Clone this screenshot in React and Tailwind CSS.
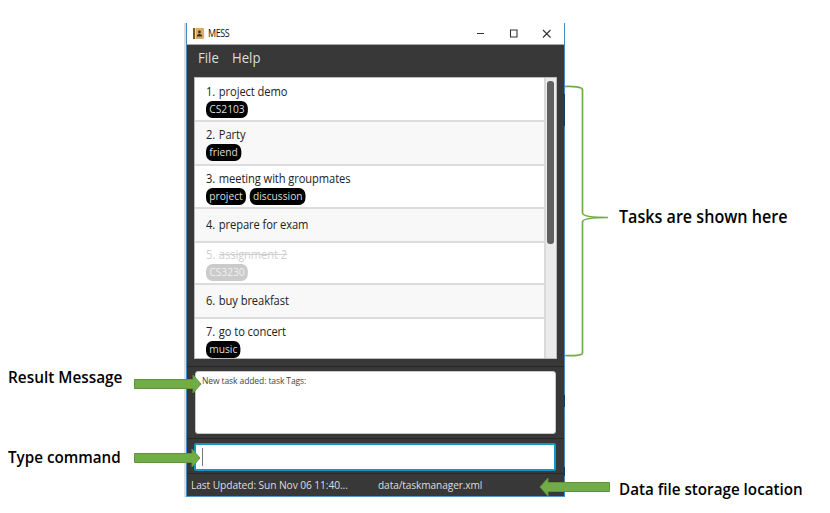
const tasks = [
  { n: 1, name: 'project demo', tags: ['CS2103'], row: 'h-[43px] bg-white pt-px' },
  { n: 2, name: 'Party', tags: ['friend'], row: 'h-[44px] bg-[#f8f8f8]' },
  { n: 3, name: 'meeting with groupmates', tags: ['project', 'discussion'], row: 'h-[43px] bg-white pt-px' },
  { n: 4, name: 'prepare for exam', tags: [], row: 'h-[34px] bg-[#f8f8f8] pb-[2px]' },
  { n: 5, name: 'assignment 2', tags: ['CS3230'], done: true, row: 'h-[42px] bg-white' },
  { n: 6, name: 'buy breakfast', tags: [], row: 'h-[34px] bg-[#f8f8f8] pb-[2px]' },
  { n: 7, name: 'go to concert', tags: ['music'], row: 'h-[43px] bg-white pt-[2px]' },
];

function TaskRow({ task }) {
  return (
    <div className={`flex shrink-0 flex-col justify-center border-b-2 border-[#dcdcdc] pl-[11px] ${task.row}`}>
      <div className={`flex h-[17px] origin-left scale-x-[0.93] items-center gap-1 whitespace-nowrap text-[12px] leading-[17px] tracking-[-0.1px] ${task.done ? 'text-[#cfcfcf]' : 'text-[#222]'}`}>
        <span>{task.n}.</span>
        <span className={task.done ? 'line-through' : ''}>{task.name}</span>
      </div>
      {task.tags.length > 0 && (
        <div className="mt-[1px] flex origin-left scale-x-[0.93] gap-[4px]">
          {task.tags.map((tag) => (
            <span
              key={tag}
              className={`h-[17px] rounded-[7px] px-[3.5px] text-[11px] leading-[16px] ${task.done ? 'bg-[#cbcbcb] text-[#f0f0f0]' : 'bg-black text-[#dedede]'}`}
            >
              {tag}
            </span>
          ))}
        </div>
      )}
    </div>
  );
}

function Arrow({ className, width, flip }) {
  const w = width;
  const points = `0.5,5.5 ${w - 9},5.5 ${w - 9},1 ${w - 1},10 ${w - 9},19 ${w - 9},14.5 0.5,14.5`;
  return (
    <svg className={`absolute ${className}`} width={w} height="20" viewBox={`0 0 ${w} 20`}>
      <polygon points={points} fill="#70ad47" stroke="#5f943c" strokeWidth="1" transform={flip ? `translate(${w} 0) scale(-1 1)` : undefined} />
    </svg>
  );
}

function TitleBar() {
  return (
    <div className="flex h-[22px] shrink-0 items-center border-b border-[#aaa] bg-white pl-[6px] pr-[12px]">
      <svg width="11" height="11" viewBox="0 0 11 11">
        <rect width="11" height="11" rx="1" fill="#d9ab66" />
        <rect width="2" height="11" fill="#80551f" />
        <rect x="2" width="1" height="11" fill="#f4d79a" />
        <circle cx="6.5" cy="4" r="1.4" fill="#493313" />
        <path d="M4 8.5V7.3L5.5 6h2L9 7.3v1.2z" fill="#493313" />
      </svg>
      <span className="ml-[4px] origin-left scale-x-[0.9] text-[10px] tracking-[-0.5px] text-[#111]">MESS</span>
      <svg className="ml-auto" width="76" height="11" viewBox="0 0 76 11" fill="none" stroke="#333" strokeWidth="1.1">
        <path d="M1 5.5h7M34.5 2h6.5v7h-6.5zM67 2l7.5 7.5M74.5 2l-7.5 7.5" />
      </svg>
    </div>
  );
}

export default function App() {
  return (
    <div className="relative flex h-[513px] w-[830px] overflow-hidden bg-white font-['Open_Sans','Noto_Sans',sans-serif]">
      <aside className="flex w-[184px] shrink-0 flex-col pl-[8px] pt-[366px] text-[16px] font-semibold leading-[22px] text-black">
        <div className="origin-left scale-x-[0.96] whitespace-nowrap">Result Message</div>
        <div className="mt-[58px] origin-left scale-x-[0.95] whitespace-nowrap">Type command</div>
      </aside>

      <main className="mt-[23px] flex h-[474px] w-[381px] shrink-0 border-l-2 border-[#dedede]">
        <div className="flex min-w-0 flex-1 flex-col border-x border-b border-x-[#3e8acb] border-b-[#5798cb] bg-[#383838]">
          <TitleBar />
          <nav className="flex h-[32px] shrink-0 items-center pb-[8px] pl-[11px] text-[14px] text-[#dedede]">
            <span className="w-[34px] origin-left scale-x-[0.94]">File</span>
            <span className="origin-left scale-x-[0.94]">Help</span>
          </nav>
          <section className="ml-[7px] flex h-[282px] w-[363px] shrink-0 border border-[#bbb] bg-white">
            <div className="flex min-w-0 flex-1 flex-col overflow-hidden pt-px">
              {tasks.map((task) => <TaskRow key={task.n} task={task} />)}
            </div>
            <div className="w-[12px] border-l-2 border-[#d9d9d9] bg-[#ebebeb] pl-px pt-[3px]">
              <div className="h-[163px] w-[7px] rounded-[3px] bg-[#606060]" />
            </div>
          </section>
          <section className="mt-[7px] h-[72px] shrink-0 border-t border-[#272727] pl-[8px] pt-[4px]">
            <div className="h-[63px] w-[361px] rounded-[3px] border border-[#c7c7c7] bg-white pl-[6px] pt-[2px] text-[8.5px] leading-[14px] tracking-[-0.1px] text-[#444]">
              New task added: task Tags:
            </div>
          </section>
          <section className="h-[35px] shrink-0 border-t border-[#272727] pl-[7px] pt-[4px]">
            <div className="flex h-[28px] w-[362px] items-center rounded-[2px] border-2 border-[#1596c4] bg-white pl-[6px]">
              <div className="h-[18px] w-px bg-[#777]" />
            </div>
          </section>
          <footer className="flex flex-1 items-center border-t border-[#292929] pl-[4px] text-[11px] text-[#dedede]">
            <span className="w-[187px] origin-left scale-x-[0.93] whitespace-nowrap tracking-[-0.1px]">Last Updated: Sun Nov 06 11:40...</span>
            <span className="origin-left scale-x-[0.92] whitespace-nowrap tracking-[-0.1px]">data/taskmanager.xml</span>
          </footer>
        </div>
      </main>

      <aside className="flex flex-1 flex-col pl-[54px] pt-[204px] font-semibold text-black">
        <div className="origin-left scale-x-[0.895] whitespace-nowrap text-[18px] leading-[25px]">Tasks are shown here</div>
        <div className="mt-[248px] origin-left scale-x-[0.95] whitespace-nowrap text-[16px] leading-[24px]">Data file storage location</div>
      </aside>

      <div className="absolute left-[564px] top-[94px] h-[32px] w-px bg-[#173b5c]" />
      <div className="absolute left-[564px] top-[395px] h-[12px] w-px bg-[#173b5c]" />
      <div className="absolute left-[564px] top-[467px] h-[9px] w-px bg-[#173b5c]" />
      <svg className="absolute left-[563px] top-[84px]" width="46" height="274" viewBox="0 0 46 274" fill="none" stroke="#70ad47" strokeWidth="1.7">
        <path d="M2 2.5C10 2 19 3 19.5 5.5V129C19.5 132 28 133.5 45 133.5C28 133.5 19.5 135 19.5 138V269C19.5 271.5 10 272 2 271.5" />
      </svg>
      <Arrow className="left-[134px] top-[374px]" width={68} />
      <Arrow className="left-[134px] top-[448px]" width={67} />
      <Arrow className="left-[539px] top-[477px]" width={71} flip />
    </div>
  );
}
